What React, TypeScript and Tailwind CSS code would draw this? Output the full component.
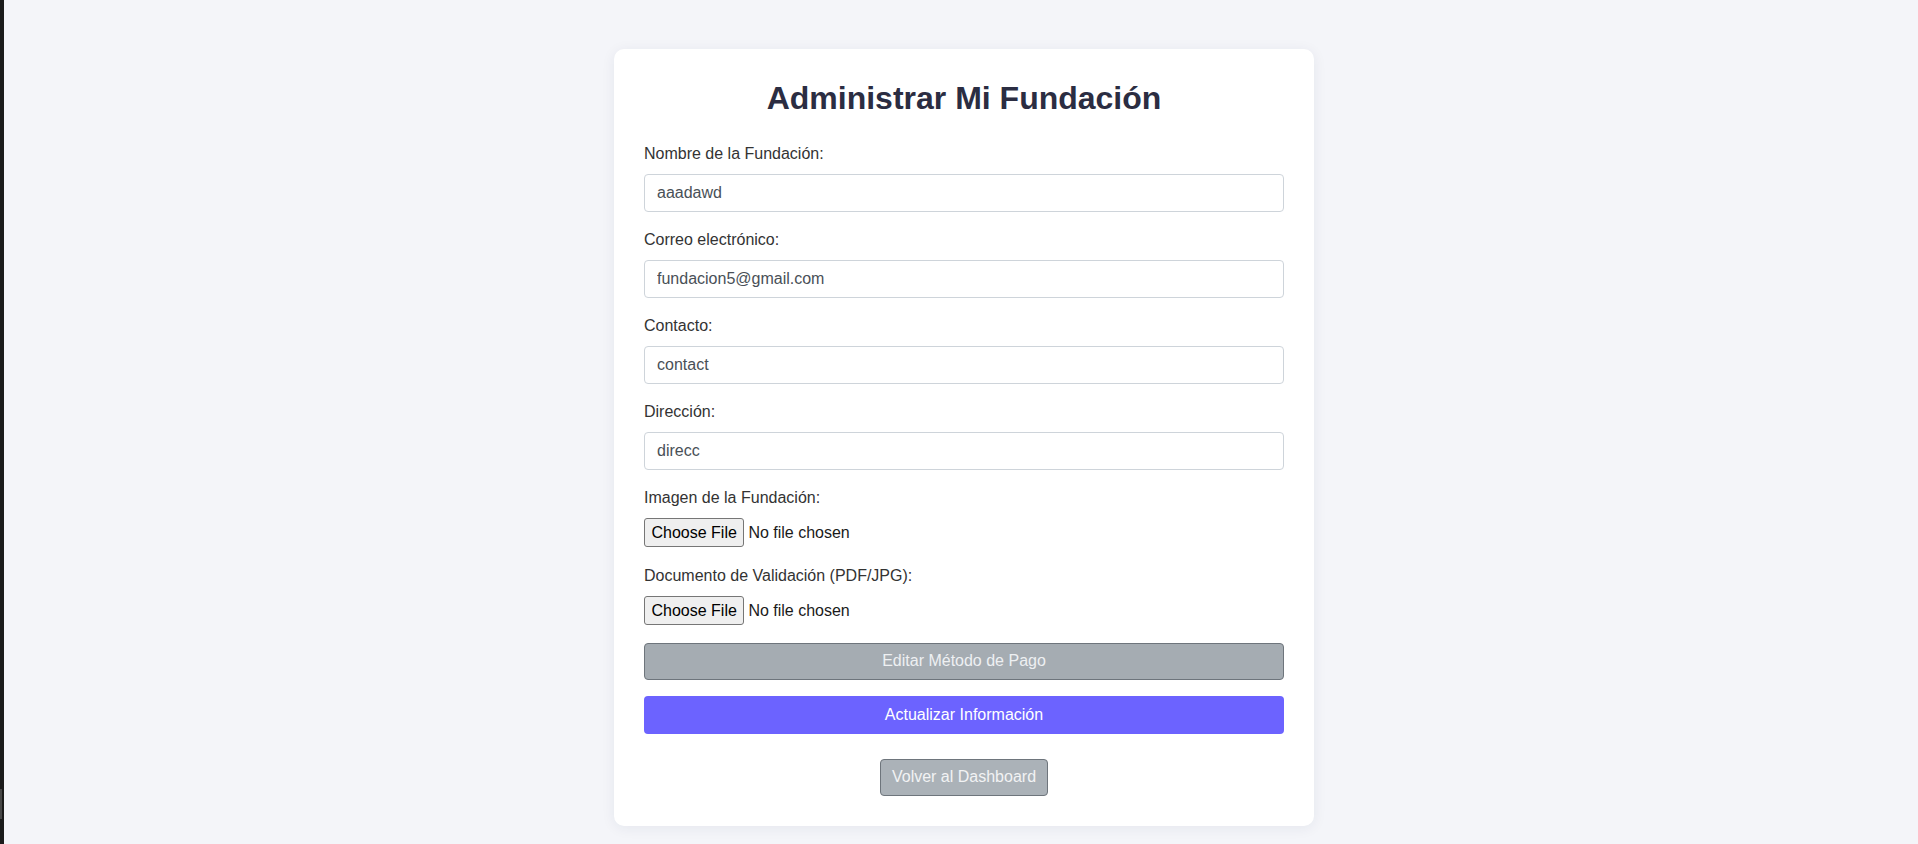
import React from 'react';

interface FieldProps {
  label: string;
  value: string;
  type?: string;
}

function TextField({ label, value, type = 'text' }: FieldProps) {
  return (
    <div className="mb-[19.5px]">
      <label className="block mb-[11px] text-[16px] leading-[normal] text-[#333]">{label}</label>
      <input
        type={type}
        defaultValue={value}
        className="block w-full h-[37.5px] px-[12px] border border-[#ced4da] rounded-[4px] bg-white text-[16px] text-[#495057] outline-none"
      />
    </div>
  );
}

function FileField({ label, accept, last = false }: { label: string; accept?: string; last?: boolean }) {
  return (
    <div className={last ? 'mb-[17.5px]' : 'mb-[19.5px]'}>
      <label className="block mb-[11px] text-[16px] leading-[normal] text-[#333]">{label}</label>
      <label className="flex items-center h-[29.4px] text-[16px] text-[#1a1a1a] cursor-pointer">
        <input type="file" accept={accept} className="hidden" />
        <span className="flex items-center h-[29.4px] px-[6.5px] mr-[4px] border border-[#767676] rounded-[3px] bg-[#efefef] text-black">
          Choose File
        </span>
        <span>No file chosen</span>
      </label>
    </div>
  );
}

export default function App() {
  return (
    <div className="flex h-[844px] font-['Liberation_Sans',Arial,sans-serif]">
      {/* window edge on the left */}
      <div className="relative w-[4px] bg-[#1b1b1b]">
        <div className="absolute left-0 top-[789px] w-[2px] h-[30px] bg-[#474747]" />
      </div>

      <main className="flex-1 flex justify-center items-start pt-[49px] pl-[6px] bg-[#f4f5f9]">
        <div className="w-[700px] px-[30px] pt-[31px] pb-[30px] bg-white rounded-[10px] shadow-[0_2px_14px_rgba(30,40,80,0.07)]">
          <h1 className="mb-[28px] text-center text-[32px] font-bold leading-[normal] text-[#2b2d42]">
            Administrar Mi Fundación
          </h1>

          <form onSubmit={(e) => e.preventDefault()}>
            <TextField label="Nombre de la Fundación:" value="aaadawd" />
            <TextField label="Correo electrónico:" value="fundacion5@gmail.com" type="email" />
            <TextField label="Contacto:" value="contact" />
            <TextField label="Dirección:" value="direcc" />
            <FileField label="Imagen de la Fundación:" accept="image/*" />
            <FileField label="Documento de Validación (PDF/JPG):" accept=".pdf,.jpg,.jpeg" last />

            <button
              type="button"
              disabled
              className="flex items-center justify-center w-full h-[37px] mb-[16.7px] border border-[#6e757c] rounded-[4px] bg-[#a5acb2] text-[16px] text-[#eef0f2]"
            >
              Editar Método de Pago
            </button>

            <button
              type="submit"
              className="flex items-center justify-center w-full h-[37.3px] rounded-[4px] bg-[#6c63ff] text-[16px] text-white"
            >
              Actualizar Información
            </button>
          </form>

          <div className="flex justify-center mt-[25px]">
            <button
              type="button"
              className="flex items-center h-[37.4px] px-[11px] border border-[#6e757c] rounded-[4px] bg-[#abb2b8] text-[16px] text-[#f2f3f4]"
            >
              Volver al Dashboard
            </button>
          </div>
        </div>
      </main>
    </div>
  );
}
